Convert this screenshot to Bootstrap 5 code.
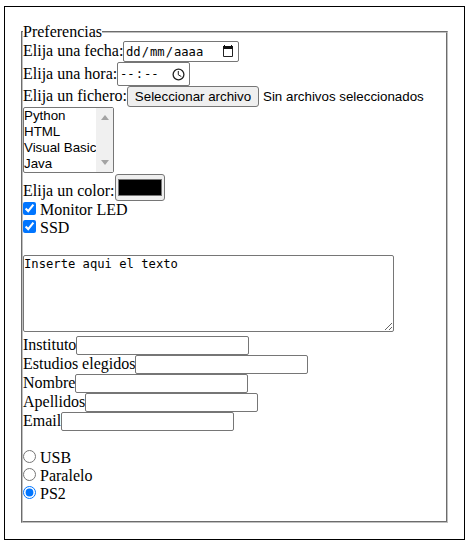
<!DOCTYPE html>
<html lang="es">
<head>
<meta charset="utf-8">
<meta name="viewport" content="width=device-width, initial-scale=1">
<title>Preferencias</title>
<link href="https://cdn.jsdelivr.net/npm/bootstrap@5.3.0/dist/css/bootstrap.min.css" rel="stylesheet">
<style>
body{font:16px/18px "Liberation Serif",serif;color:#000;background:#fff}
.frame{width:461px;height:534px;margin:6px 0 0 4px;border:1px solid #000;padding:16px 16px 0 16px}
.prefs{height:500px;border:2px groove #c0c0c0}
.prefs legend{float:none;width:auto;font-size:16px;line-height:18px;margin:0;height:18px}
.line{height:18px;white-space:nowrap}
.box{border:1px solid #767676;border-radius:2px;background:#fff}
.mono{font-family:"DejaVu Sans Mono",monospace;font-size:12.18px}
.sans{font-family:"Liberation Sans",sans-serif;font-size:13.33px}
.r-date{height:21px;padding-top:1px}
.r-date .box{width:116px;height:21px;margin-top:-1px;padding:0 4px 0 1px}
.r-time{height:24px;padding-top:3px}
.r-time .box{width:73px;height:24px;margin-top:-3px;padding:0 4px 0 1px}
.seg{padding:0 1px}
.r-file{height:21px;padding-top:1px}
.pick{width:132px;height:21px;margin-top:-1px;border:1px solid #767676;border-radius:3px;background:#efefef;color:#000;padding:0;line-height:19px}
.pick+span{margin-left:4px;line-height:19px}
.langs{width:91px;height:66px}
.langs ul{line-height:16px;width:72px}
.track{width:17px;background:#f0f0f0;padding:7px 0}
.r-color{height:28px;padding-top:9px}
.swatch{width:50px;height:27px;margin-top:-8px;border:1px solid #767676;border-radius:3px;background:#efefef;padding:4px 2px}
.swatch i{display:block;height:17px;background:#000;border:1px solid #777}
.tick{width:13px;height:13px;margin:1px 4px 0 0;flex:none}
.note{display:block;width:371px;height:77px;margin:18px 0 4px;padding:1px 0;line-height:15px;resize:both;color:#000;outline:0}
.line .field{width:173px;height:19px;padding:1px 2px;outline:0}
.r-field{height:19px}
.w-date{width:100px}.w-time{width:94px}.w-file{width:104px}.w-color{width:92px}
.w-inst{width:53px}.w-stud{width:112px}.w-name{width:52px}.w-last{width:62px}.w-mail{width:38px}
.ports{padding-top:18px}
</style>
</head>
<body>
<main class="frame">
<form>
<fieldset class="prefs">
<legend>Preferencias</legend>
<div class="line r-date d-flex"><span class="w-date">Elija una fecha:</span>
<div class="box mono d-flex align-items-center justify-content-between"><span><span class="seg">dd</span>/<span class="seg">mm</span>/<span class="seg">aaaa</span></span>
<svg width="12" height="13" viewBox="0 0 12 13"><path d="M1.500 2.500h9v9h-9z" fill="none" stroke="#222"/><path d="M1 1h10v3H1zM2 0h1v2H2zm7 0h1v2H9z" fill="#111"/></svg></div></div>
<div class="line r-time d-flex"><span class="w-time">Elija una hora:</span>
<div class="box mono d-flex align-items-center justify-content-between"><span><span class="seg">--</span>:<span class="seg">--</span></span>
<svg width="13" height="13" viewBox="0 0 13 13" fill="none" stroke="#222"><circle cx="6.500" cy="6.500" r="5.400" stroke-width="1.300"/><path d="M6.300 3v3.800l3 1.700"/></svg></div></div>
<div class="line r-file d-flex"><span class="w-file">Elija un fichero:</span><button type="button" class="pick sans">Seleccionar archivo</button><span class="sans">Sin archivos seleccionados</span></div>
<div class="langs box sans d-flex">
<ul class="list-unstyled mb-0 text-nowrap"><li>Python</li><li>HTML</li><li>Visual Basic</li><li>Java</li></ul>
<div class="track d-flex flex-column justify-content-between align-items-center flex-shrink-0">
<svg width="8" height="5"><path d="M0 5L4 0l4 5z" fill="#a3a3a3"/></svg>
<svg width="8" height="5"><path d="M0 0h8L4 5z" fill="#a3a3a3"/></svg></div></div>
<div class="line r-color d-flex"><span class="w-color">Elija un color:</span><div class="swatch"><i></i></div></div>
<label class="line d-flex"><input class="tick" type="checkbox" checked>Monitor LED</label>
<label class="line d-flex"><input class="tick" type="checkbox" checked>SSD</label>
<textarea class="note box mono" spellcheck="false">Inserte aqui el texto</textarea>
<label class="line r-field d-flex"><span class="w-inst">Instituto</span><input class="field box" type="text"></label>
<label class="line r-field d-flex"><span class="w-stud">Estudios elegidos</span><input class="field box" type="text"></label>
<label class="line r-field d-flex"><span class="w-name">Nombre</span><input class="field box" type="text"></label>
<label class="line r-field d-flex"><span class="w-last">Apellidos</span><input class="field box" type="text"></label>
<label class="line r-field d-flex"><span class="w-mail">Email</span><input class="field box" type="text"></label>
<div class="ports">
<label class="line d-flex"><input class="tick" type="radio" name="port">USB</label>
<label class="line d-flex"><input class="tick" type="radio" name="port">Paralelo</label>
<label class="line d-flex"><input class="tick" type="radio" name="port" checked>PS2</label>
</div>
</fieldset>
</form>
</main>
<script src="https://cdn.jsdelivr.net/npm/bootstrap@5.3.0/dist/js/bootstrap.bundle.min.js"></script>
</body>
</html>
